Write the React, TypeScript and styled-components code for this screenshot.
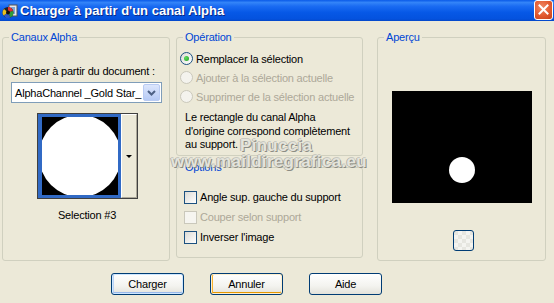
import React from 'react';
import styled, { createGlobalStyle } from 'styled-components';

const Global = createGlobalStyle`
    html, body {
        margin: 0;
        padding: 0;
        background: #ECE9D8;
    }
`

const Window = styled.div`
    position: relative;
    width: 554px;
    height: 303px;
    overflow: hidden;
    background-color: #ECE9D8;
    display: flex;
    flex-direction: column;
    font-family: "Liberation Sans", Arial, sans-serif;
    font-size: 11px;
    letter-spacing: -0.2px;
    color: #000;
`

const TitleBar = styled.div`
    height: 21px;
    flex: none;
    display: flex;
    flex-direction: row;
    align-items: center;
    padding: 0 1px 0 2px;
    background: linear-gradient(#0A5AE8 0%, #3384F8 12%, #1A6BF2 30%, #0658E6 60%, #0452DE 90%, #0447C8 100%);
`

const TitleIcon = styled.svg`
    width: 16px;
    height: 16px;
    flex: none;
`

const TitleText = styled.div`
    flex: 1;
    margin-left: 2px;
    color: #fff;
    font-family: "Liberation Sans", Arial, sans-serif;
    font-weight: bold;
    font-size: 13px;
    letter-spacing: 0;
    text-shadow: 1px 1px 0 #0A2A88;
`

const CloseButton = styled.div`
    width: 17px;
    height: 18px;
    margin-top: -2px;
    border: 1px solid #fff;
    border-radius: 3px;
    background: radial-gradient(circle at 40% 35%, #F08A66 0%, #E2592F 55%, #C4401A 100%);
    display: flex;
    align-items: center;
    justify-content: center;
`

const Body = styled.div`
    display: flex;
    flex-direction: column;
    padding: 10px 8px 0 2px;
`

const Columns = styled.div`
    display: flex;
    flex-direction: row;
    align-items: flex-start;
`

const Column = styled.div<{ $gap?: number; $ml?: number }>`
    display: flex;
    flex-direction: column;
    gap: ${p => p.$gap ?? 0}px;
    margin-left: ${p => p.$ml ?? 0}px;
`

const Group = styled.fieldset<{ $width: number; $height: number }>`
    box-sizing: border-box;
    width: ${p => p.$width}px;
    height: ${p => p.$height}px;
    margin: 0;
    padding: 0;
    min-width: 0;
    border: 1px solid #D0D0BF;
    border-radius: 3px;
    legend {
        margin-left: 6px;
        padding: 0 2px;
        color: #0046D5;
        line-height: 13px;
        font-size: 11px;
    }
`

const GroupBody = styled.div<{ $pt: number; $pl: number; $center?: boolean }>`
    display: flex;
    flex-direction: column;
    align-items: ${p => p.$center ? 'center' : 'stretch'};
    padding: ${p => p.$pt}px 0 0 ${p => p.$pl}px;
`

const Label = styled.div`
    line-height: 13px;
    white-space: nowrap;
`

const Combo = styled.div`
    box-sizing: border-box;
    margin-top: 4px;
    width: 151px;
    height: 21px;
    border: 1px solid #7F9DB9;
    background: #fff;
    display: flex;
    flex-direction: row;
    align-items: center;
    padding: 1px;
`

const ComboText = styled.div`
    flex: 1;
    overflow: hidden;
    white-space: nowrap;
    padding-left: 2px;
`

const ComboButton = styled.div`
    box-sizing: border-box;
    width: 17px;
    height: 17px;
    border: 1px solid #B9CBF3;
    border-radius: 2px;
    background: linear-gradient(#DCE6FC, #B6CAF5);
    display: flex;
    align-items: center;
    justify-content: center;
`

const Thumb = styled.div`
    margin-top: 10px;
    width: 101px;
    height: 86px;
    box-sizing: border-box;
    border: 1px solid #404040;
    display: flex;
    flex-direction: row;
    background: #fff;
`

const ThumbImage = styled.div`
    box-sizing: border-box;
    width: 83px;
    height: 84px;
    border: 3px solid #316AC5;
    border-left-width: 4px;
    background: #000;
    overflow: hidden;
    display: flex;
    align-items: center;
    justify-content: center;
`

const ThumbCircle = styled.div`
    flex: none;
    width: 82px;
    height: 82px;
    border-radius: 50%;
    background: #fff;
`

const ThumbArrow = styled.div`
    flex: 1;
    box-sizing: border-box;
    border-left: 1px solid #fff;
    border-top: 1px solid #fff;
    border-right: 1px solid #ACA899;
    border-bottom: 1px solid #ACA899;
    background: #ECE9D8;
    display: flex;
    align-items: center;
    justify-content: center;
    &::after {
        content: "";
        border-left: 3px solid transparent;
        border-right: 3px solid transparent;
        border-top: 3px solid #000;
    }
`

const Caption = styled.div`
    margin-top: 10px;
    line-height: 13px;
`

const OptionRow = styled.div<{ $h: number; $disabled?: boolean }>`
    height: ${p => p.$h}px;
    display: flex;
    flex-direction: row;
    align-items: center;
    gap: 3px;
    color: ${p => p.$disabled ? '#ACA899' : '#000'};
    white-space: nowrap;
`

const Radio = styled.span<{ $checked?: boolean; $disabled?: boolean }>`
    box-sizing: border-box;
    width: 13px;
    height: 13px;
    flex: none;
    border-radius: 50%;
    border: 1px solid ${p => p.$disabled ? '#CAC8BB' : '#1C5180'};
    background: ${p => p.$disabled ? '#F4F3EE' : 'linear-gradient(135deg, #DCDBD5, #fff)'};
    display: flex;
    align-items: center;
    justify-content: center;
    &::after {
        content: "";
        display: ${p => p.$checked ? 'block' : 'none'};
        width: 5px;
        height: 5px;
        border-radius: 50%;
        background: radial-gradient(circle at 35% 35%, #5EDB5E, #21A121);
    }
`

const Check = styled.span<{ $disabled?: boolean }>`
    box-sizing: border-box;
    width: 13px;
    height: 13px;
    flex: none;
    border: 1px solid ${p => p.$disabled ? '#CAC8BB' : '#1C5180'};
    background: ${p => p.$disabled ? '#F6F5F0' : 'linear-gradient(135deg, #DCDBD5, #fff)'};
`

const Note = styled.div`
    margin-top: 5px;
    padding-left: 5px;
    line-height: 13.5px;
`

const Preview = styled.div`
    margin-top: 47px;
    width: 140px;
    height: 112px;
    background: #000;
    display: flex;
    justify-content: center;
    align-items: flex-end;
`

const PreviewDot = styled.div`
    width: 26px;
    height: 26px;
    margin-bottom: 20px;
    border-radius: 50%;
    background: #fff;
`

const SmallButton = styled.div`
    box-sizing: border-box;
    margin-top: 27px;
    margin-left: 3px;
    width: 21px;
    height: 21px;
    border: 1px solid #003C74;
    border-radius: 3px;
    background:
        repeating-conic-gradient(#F4F4F0 0 25%, #E6E6E0 0 50%) 0 0 / 8px 8px;
`

const ButtonRow = styled.div`
    display: flex;
    flex-direction: row;
    gap: 26px;
    margin-top: 12px;
    padding-left: 109px;
`

const Button = styled.div<{ $glow?: 'default' | 'hover' }>`
    box-sizing: border-box;
    width: 73px;
    height: 22px;
    border: 1px solid #003C74;
    border-radius: 3px;
    background: linear-gradient(#FFFFFF, #F3F3EF 60%, #E3E2DA);
    display: flex;
    align-items: center;
    justify-content: center;
    box-shadow: ${p => p.$glow === 'default'
        ? 'inset 0 0 0 1px #CEE7FF, inset 0 -1px 0 1px #98B8EA, inset 1px 0 0 1px #BCD4F6'
        : p.$glow === 'hover'
            ? 'inset 0 0 0 1px #FFF0CF, inset 0 -1px 0 1px #E59700, inset 1px 0 0 1px #F8B330'
            : 'none'};
`

const Watermark = styled.div<{ $x: number; $y: number }>`
    position: absolute;
    left: ${p => p.$x}px;
    top: ${p => p.$y}px;
    font-family: "Liberation Sans", Arial, sans-serif;
    font-weight: bold;
    font-size: 17px;
    letter-spacing: 0.3px;
    color: #E4E4DC;
    white-space: nowrap;
    text-shadow: 1px 1px 0 #8C8C84, -1px 0 0 #B4B4AC, 0 -1px 0 #C8C8C0;
    pointer-events: none;
`

export default function App() {
    return <>
        <Global />
        <Window>
            <TitleBar>
                <TitleIcon viewBox="0 0 16 16">
                    <rect x="7" y="2" width="8" height="11" fill="#E8E8E8" stroke="#555" strokeWidth="1" />
                    <rect x="9" y="4" width="4" height="7" fill="#7FA7D8" />
                    <circle cx="6" cy="9.5" r="5.5" fill="#222" />
                    <path d="M6 9.5 L6 4 A5.5 5.5 0 0 1 11 8 Z" fill="#E03030" />
                    <path d="M6 9.5 L11 8 A5.5 5.5 0 0 1 8.5 14.5 Z" fill="#2E9E3A" />
                    <path d="M6 9.5 L8.5 14.5 A5.5 5.5 0 0 1 1.5 12.5 Z" fill="#2B57C8" />
                    <path d="M6 9.5 L1.5 12.5 A5.5 5.5 0 0 1 2 6 Z" fill="#E8C020" />
                    <circle cx="6" cy="9.5" r="2" fill="#111" />
                </TitleIcon>
                <TitleText>Charger à partir d'un canal Alpha</TitleText>
                <CloseButton>
                    <svg width="11" height="11" viewBox="0 0 11 11">
                        <path d="M1.5 1.5 L9.5 9.5 M9.5 1.5 L1.5 9.5" stroke="#fff" strokeWidth="2" strokeLinecap="square" />
                    </svg>
                </CloseButton>
            </TitleBar>
            <Body>
                <Columns>
                    <Group $width={169} $height={230}>
                        <legend>Canaux Alpha</legend>
                        <GroupBody $pt={21} $pl={8}>
                            <Label>Charger à partir du document :</Label>
                            <Combo>
                                <ComboText>AlphaChannel _Gold Star_</ComboText>
                                <ComboButton>
                                    <svg width="9" height="6" viewBox="0 0 9 6">
                                        <path d="M1 1 L4.5 4.5 L8 1" stroke="#4D6185" strokeWidth="2" fill="none" />
                                    </svg>
                                </ComboButton>
                            </Combo>
                        </GroupBody>
                        <GroupBody $pt={0} $pl={2} $center>
                            <Thumb>
                                <ThumbImage><ThumbCircle /></ThumbImage>
                                <ThumbArrow />
                            </Thumb>
                            <Caption>Selection #3</Caption>
                        </GroupBody>
                    </Group>
                    <Column $gap={5} $ml={6}>
                        <Group $width={187} $height={125}>
                            <legend>Opération</legend>
                            <GroupBody $pt={5} $pl={3}>
                                <OptionRow $h={19}><Radio $checked />Remplacer la sélection</OptionRow>
                                <OptionRow $h={19} $disabled><Radio $disabled />Ajouter à la sélection actuelle</OptionRow>
                                <OptionRow $h={19} $disabled><Radio $disabled />Supprimer de la sélection actuelle</OptionRow>
                                <Note>Le rectangle du canal Alpha<br />d'origine correspond complètement<br />au support.</Note>
                            </GroupBody>
                        </Group>
                        <Group $width={187} $height={97}>
                            <legend>Options</legend>
                            <GroupBody $pt={13} $pl={7}>
                                <OptionRow $h={20}><Check />Angle sup. gauche du support</OptionRow>
                                <OptionRow $h={20} $disabled><Check $disabled />Couper selon support</OptionRow>
                                <OptionRow $h={20}><Check />Inverser l'image</OptionRow>
                            </GroupBody>
                        </Group>
                    </Column>
                    <Column $ml={14}>
                        <Group $width={169} $height={230}>
                            <legend>Aperçu</legend>
                            <GroupBody $pt={0} $pl={0} $center>
                                <Preview><PreviewDot /></Preview>
                                <SmallButton />
                            </GroupBody>
                        </Group>
                    </Column>
                </Columns>
                <ButtonRow>
                    <Button $glow="default">Charger</Button>
                    <Button $glow="hover">Annuler</Button>
                    <Button>Aide</Button>
                </ButtonRow>
            </Body>
            <Watermark $x={240} $y={136}>Pinuccia</Watermark>
            <Watermark $x={171} $y={152}>www.maildiregrafica.eu</Watermark>
        </Window>
    </>
}
